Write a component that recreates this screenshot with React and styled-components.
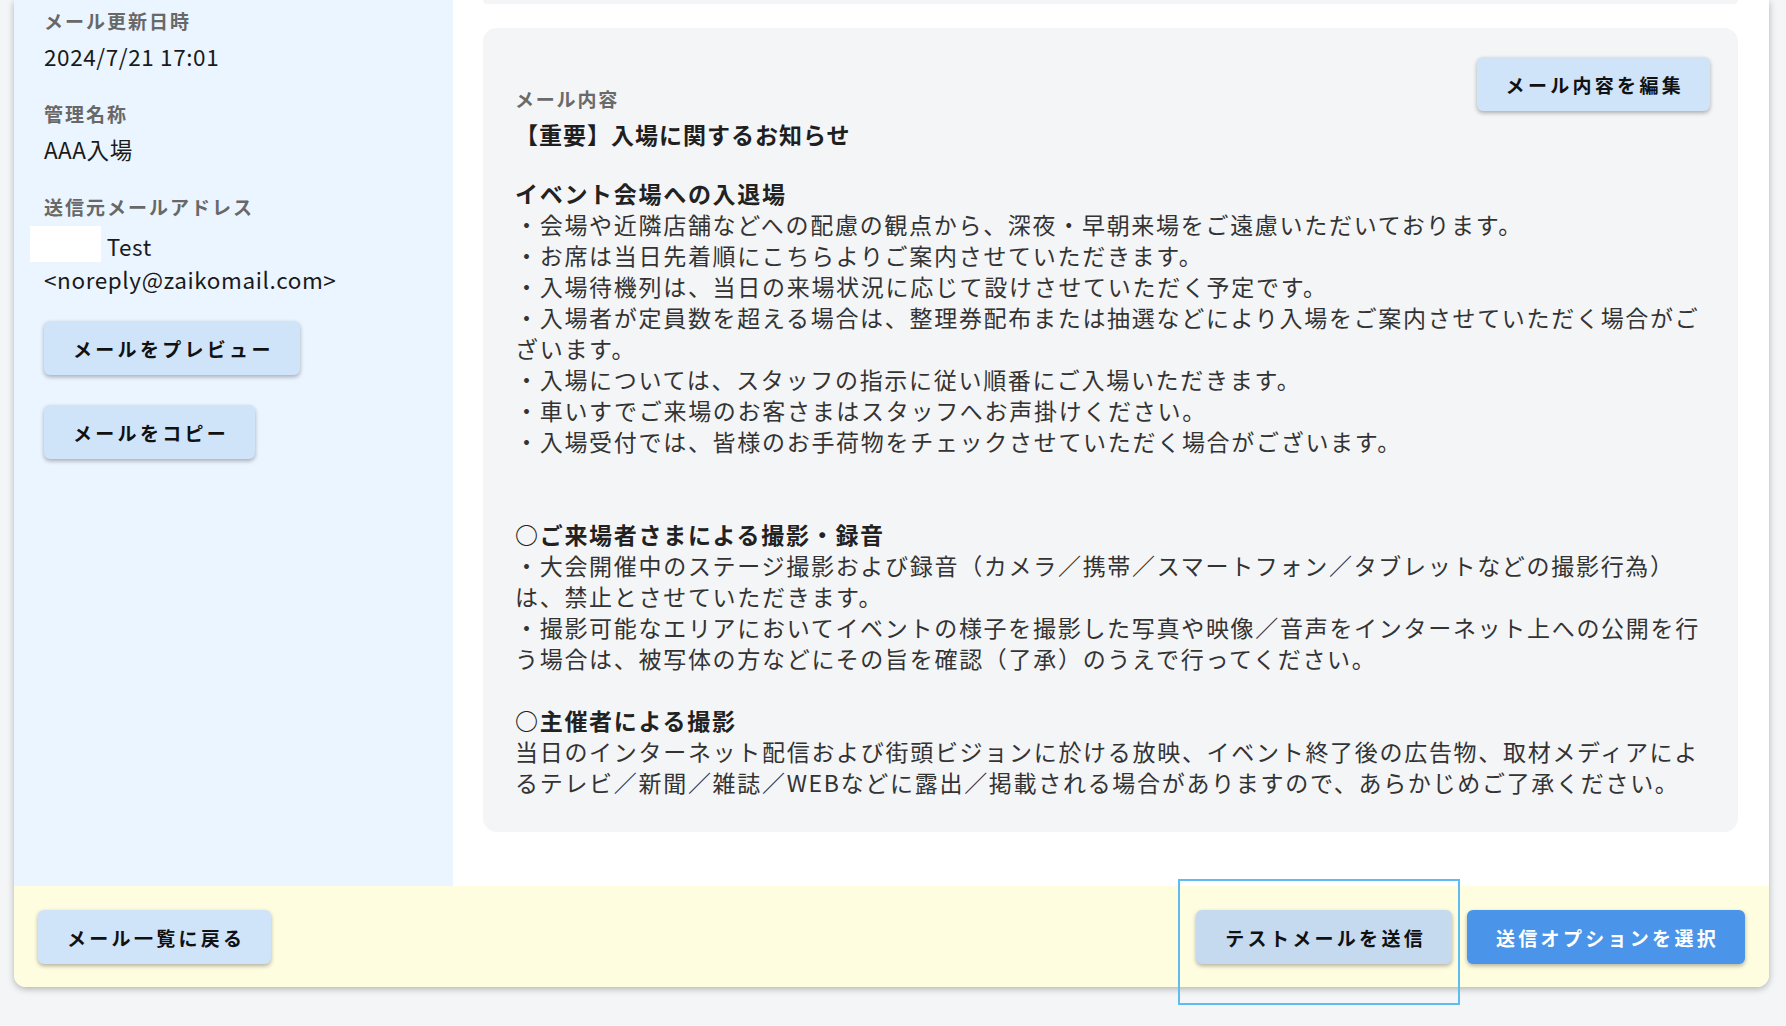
import React from 'react';
import styled, { createGlobalStyle } from 'styled-components';

const FONT = '"Noto Sans CJK JP", "Noto Sans", sans-serif';

const GlobalStyle = createGlobalStyle`
    html, body {
        margin: 0;
        padding: 0;
        background-color: #f4f5f7;
        font-family: ${FONT};
        overflow: hidden;
    }
`;

const fields = [
    { label: 'メール更新日時', value: '2024/7/21 17:01' },
    { label: '管理名称', value: 'AAA入場' },
];

const sections = [
    {
        heading: 'イベント会場への入退場',
        gap: 0,
        lines: [
            '・会場や近隣店舗などへの配慮の観点から、深夜・早朝来場をご遠慮いただいております。',
            '・お席は当日先着順にこちらよりご案内させていただきます。',
            '・入場待機列は、当日の来場状況に応じて設けさせていただく予定です。',
            '・入場者が定員数を超える場合は、整理券配布または抽選などにより入場をご案内させていただく場合がございます。',
            '・入場については、スタッフの指示に従い順番にご入場いただきます。',
            '・車いすでご来場のお客さまはスタッフへお声掛けください。',
            '・入場受付では、皆様のお手荷物をチェックさせていただく場合がございます。',
        ],
    },
    {
        heading: '○ご来場者さまによる撮影・録音',
        gap: 62,
        lines: [
            '・大会開催中のステージ撮影および録音（カメラ／携帯／スマートフォン／タブレットなどの撮影行為）は、禁止とさせていただきます。',
            '・撮影可能なエリアにおいてイベントの様子を撮影した写真や映像／音声をインターネット上への公開を行う場合は、被写体の方などにその旨を確認（了承）のうえで行ってください。',
        ],
    },
    {
        heading: '○主催者による撮影',
        gap: 31,
        lines: [
            '当日のインターネット配信および街頭ビジョンに於ける放映、イベント終了後の広告物、取材メディアによるテレビ／新聞／雑誌／WEBなどに露出／掲載される場合がありますので、あらかじめご了承ください。',
        ],
    },
];

const App = () => {
    return (
        <>
            <GlobalStyle />
            <Page>
                <Card>
                    <Body>
                        <Sidebar>
                            <FieldList>
                                {fields.map((f) => (
                                    <Field key={f.label}>
                                        <Label>{f.label}</Label>
                                        <Value>{f.value}</Value>
                                    </Field>
                                ))}
                                <Field>
                                    <Label>送信元メールアドレス</Label>
                                    <Value>
                                        <Redacted /> Test
                                        <Address>&lt;noreply@zaikomail.com&gt;</Address>
                                    </Value>
                                </Field>
                            </FieldList>
                            <ButtonStack>
                                <Button>メールをプレビュー</Button>
                                <Button>メールをコピー</Button>
                            </ButtonStack>
                        </Sidebar>
                        <Main>
                            <PrevBox />
                            <ContentBox>
                                <ContentHeader>
                                    <BoxLabel>メール内容</BoxLabel>
                                    <Button>メール内容を編集</Button>
                                </ContentHeader>
                                <Subject>【重要】入場に関するお知らせ</Subject>
                                <MailBody>
                                    {sections.map((s) => (
                                        <Section key={s.heading} $gap={s.gap}>
                                            <SectionHeading>{s.heading}</SectionHeading>
                                            {s.lines.map((l) => (
                                                <Line key={l}>{l}</Line>
                                            ))}
                                        </Section>
                                    ))}
                                </MailBody>
                            </ContentBox>
                        </Main>
                    </Body>
                    <Footer>
                        <Button>メール一覧に戻る</Button>
                        <FooterRight>
                            <Focused>
                                <Button $tone="active">テストメールを送信</Button>
                                <Highlight />
                            </Focused>
                            <Button $tone="primary">送信オプションを選択</Button>
                        </FooterRight>
                    </Footer>
                </Card>
            </Page>
        </>
    );
};

export default App;

const Page = styled.div`
    width: 100vw;
    height: 100vh;
    padding-left: 14px;
    box-sizing: border-box;
`;

const Card = styled.div`
    width: 1755px;
    background-color: #ffffff;
    border-radius: 0 0 12px 12px;
    box-shadow: 0 2px 7px rgba(0, 0, 0, 0.28);
`;

const Body = styled.div`
    display: flex;
    flex-direction: row;
    align-items: stretch;
`;

const Sidebar = styled.div`
    width: 439px;
    padding: 7px 30px 0 30px;
    box-sizing: border-box;
    background-color: #ebf5ff;
`;

const FieldList = styled.div`
    display: flex;
    flex-direction: column;
    gap: 27px;
`;

const Field = styled.div`
    display: flex;
    flex-direction: column;
    gap: 5px;
`;

const Label = styled.div`
    font-size: 19px;
    line-height: 28px;
    font-weight: bold;
    letter-spacing: 2px;
    color: #686868;
`;

const Value = styled.div`
    font-size: 22.5px;
    line-height: 33px;
    letter-spacing: 0.6px;
    color: #1a1a1a;
`;

const Redacted = styled.span`
    display: inline-block;
    width: 71px;
    height: 36px;
    margin-left: -14px;
    vertical-align: -6px;
    background-color: #ffffff;
`;

const Address = styled.span`
    display: block;
`;

const ButtonStack = styled.div`
    margin-top: 25px;
    display: flex;
    flex-direction: column;
    align-items: flex-start;
    gap: 30px;
`;

const Button = styled.button`
    height: 54px;
    padding: 0 26px 0 29px;
    border: none;
    border-radius: 6px;
    box-sizing: border-box;
    white-space: nowrap;

    font-family: ${FONT};
    font-size: 19px;
    font-weight: bold;
    letter-spacing: 3.3px;

    color: ${({ $tone }) => ($tone === 'primary' ? '#ffffff' : '#111111')};
    background-color: ${({ $tone }) =>
        $tone === 'primary' ? '#4a95e9' : $tone === 'active' ? '#c5daef' : '#cfe3f9'};
    box-shadow: 0 2px 4px rgba(0, 0, 0, 0.3);

    &:hover {
        cursor: pointer;
    }
`;

const Main = styled.div`
    flex: 1;
    padding: 0 31px 54px 30px;
`;

const PrevBox = styled.div`
    height: 4px;
    margin-bottom: 24px;
    border-radius: 0 0 14px 14px;
    background-color: #f4f5f7;
`;

const ContentBox = styled.div`
    padding: 29px 28px 34px 32px;
    border-radius: 14px;
    background-color: #f4f5f7;
`;

const ContentHeader = styled.div`
    display: flex;
    flex-direction: row;
    justify-content: space-between;
    align-items: flex-end;
`;

const BoxLabel = styled.div`
    font-size: 19px;
    line-height: 24px;
    font-weight: bold;
    letter-spacing: 1.8px;
    color: #6a6a6a;
`;

const Subject = styled.div`
    margin-top: 8px;
    font-size: 23px;
    line-height: 31px;
    font-weight: bold;
    letter-spacing: 1px;
    color: #1f1f1f;
`;

const MailBody = styled.div`
    margin-top: 28px;
    width: 1195px;
    font-size: 23px;
    line-height: 31px;
    letter-spacing: 1.7px;
    color: #333333;
`;

const Section = styled.div`
    margin-top: ${({ $gap }) => $gap}px;
`;

const SectionHeading = styled.div`
    font-weight: bold;
    color: #222222;
`;

const Line = styled.div``;

const Footer = styled.div`
    display: flex;
    flex-direction: row;
    justify-content: space-between;
    align-items: center;
    padding: 24px 24px 23px 24px;
    border-radius: 0 0 12px 12px;
    background-color: #fefde0;
`;

const FooterRight = styled.div`
    display: flex;
    flex-direction: row;
    gap: 15px;
`;

const Focused = styled.div`
    position: relative;
`;

const Highlight = styled.div`
    position: absolute;
    top: -31px;
    left: -18px;
    width: 282px;
    height: 126px;
    box-sizing: border-box;
    border: 2px solid #5dbdf0;
    pointer-events: none;
`;
